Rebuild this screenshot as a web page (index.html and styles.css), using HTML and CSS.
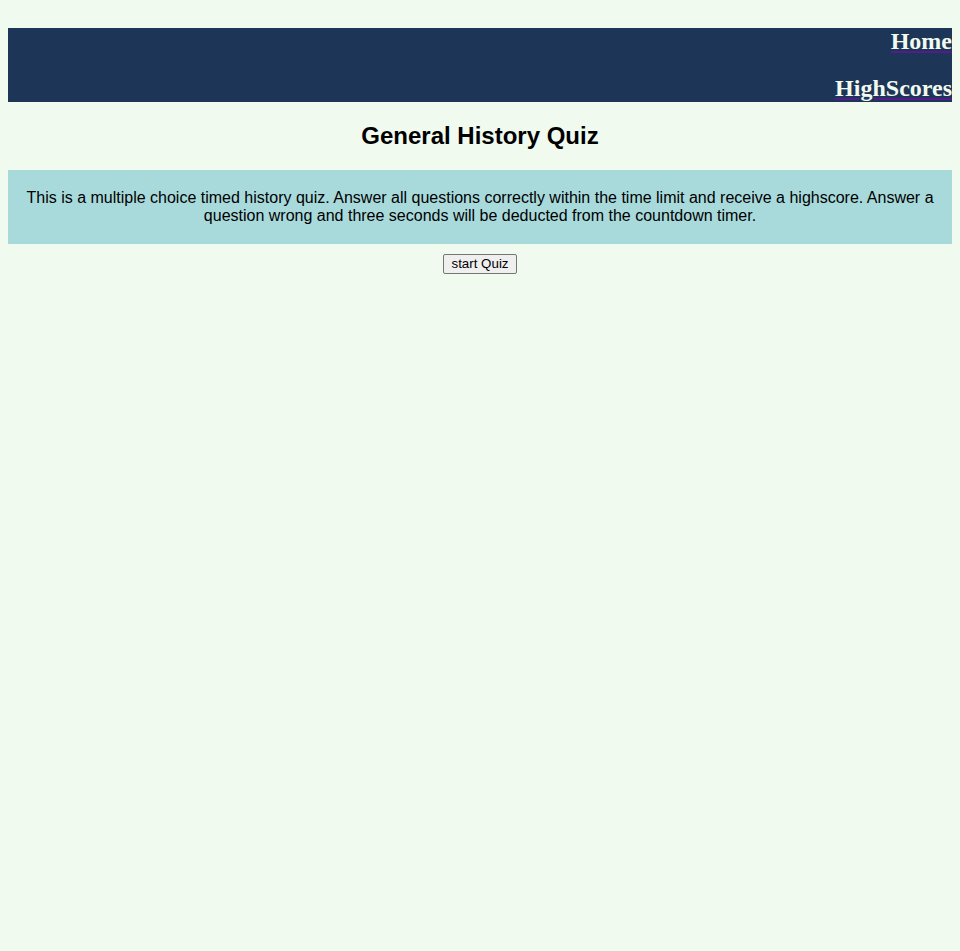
FILE: index.html
```html
<!DOCTYPE html>
<html>
<head>
<meta charset="utf-8">
<link rel="stylesheet" href="styles.css">
</head>
<body>
<header class="topbar">
  <a class="nav-link" href="#"><h2 class="nav-item">Home</h2></a>
  <a class="nav-link" href="#"><h2 class="nav-item">HighScores</h2></a>
</header>
<h2 class="title">General History Quiz</h2>
<div class="intro">
  <p class="intro-text">This is a multiple choice timed history quiz. Answer all questions correctly within the time limit and receive a highscore. Answer a question wrong and three seconds will be deducted from the countdown timer.</p>
</div>
<div class="actions">
  <button class="start-btn">start Quiz</button>
</div>
</body>
</html>
```
FILE: styles.css
```css
html, body {
  background: #f1faee;
}
body {
  margin: 8px;
  font-family: "Liberation Sans", Arial, sans-serif;
  color: #000;
}
.topbar {
  display: block;
  background: #1d3557;
  text-align: right;
}
.nav-link {
  color: #551a8b;
  text-decoration: underline;
}
.nav-item {
  font-family: "Liberation Serif", "Times New Roman", serif;
  font-size: 24px;
  font-weight: bold;
  color: #f1faee;
  margin: 20px 0;
}
.title {
  font-size: 24px;
  font-weight: bold;
  text-align: center;
  margin: 20px 0;
}
.intro {
  background: #a8dadc;
  padding: 19px 16px 18px;
  text-align: center;
}
.intro-text {
  margin: 0;
  font-size: 16px;
  line-height: 18.4px;
}
.actions {
  text-align: center;
  margin-top: 10px;
}
.start-btn {
  font-family: "Liberation Sans", Arial, sans-serif;
  font-size: 13.333px;
  background: #efefef;
  border: 1px solid #767676;
  border-radius: 2px;
  padding: 0 7px;
  height: 20px;
  box-sizing: border-box;
  color: #000;
}
```
